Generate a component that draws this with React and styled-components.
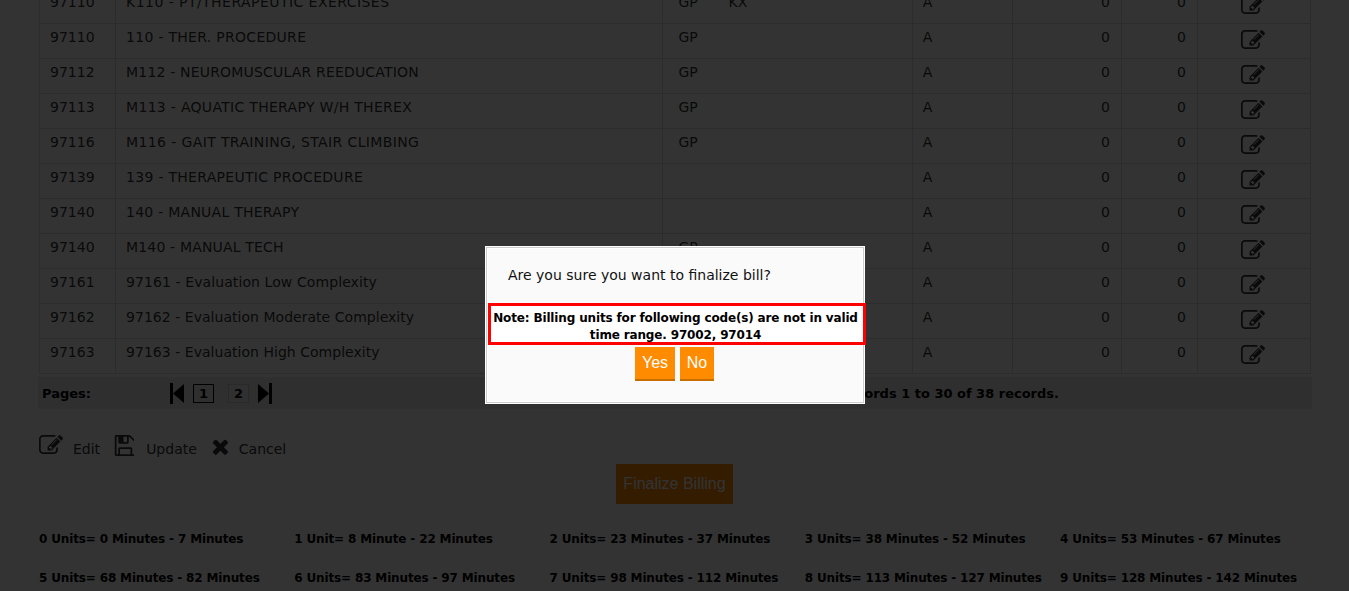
import React from 'react';
import styled, { createGlobalStyle } from 'styled-components';

const GlobalStyle = createGlobalStyle`
  html, body {
    margin: 0;
    padding: 0;
    height: 100%;
    overflow: hidden;
    background: #fff;
  }
  #root {
    height: 100%;
  }
`;

const Page = styled.div`
  height: 591px;
  overflow: hidden;
  position: relative;
  background: #fff;
  color: #333;
  font-family: "DejaVu Sans", Verdana, sans-serif;
  font-size: 14px;
`;

const Content = styled.div`
  margin-top: -12px;
  padding: 0 38px 0 39px;
`;

const Table = styled.table`
  width: 100%;
  table-layout: fixed;
  border-collapse: collapse;
  border-left: 1px solid #ccc;
  border-right: 1px solid #ccc;
`;

const Col = styled.col`
  width: ${props => props.$w}px;
`;

const Cell = styled.td`
  height: 35px;
  padding: 0 11px 0 10px;
  border: 1px solid #ddd;
  text-align: ${props => (props.$right ? 'right' : 'left')};
  vertical-align: top;
  line-height: 27px;
  box-sizing: border-box;
`;

const NameCell = styled(Cell)`
  letter-spacing: ${props => props.$track}px;
  white-space: nowrap;
`;

const ModifierCell = styled(Cell)`
  padding-left: 15px;
`;

const IconCell = styled(Cell)`
  text-align: center;
  line-height: 0;
  padding: 6px 2px 0 0;
  color: #333;
`;

const Modifier = styled.span`
  display: inline-block;
  width: 50px;
`;

const Pager = styled.div`
  display: flex;
  align-items: center;
  height: 32px;
  margin-top: 3px;
  margin-right: -1px;
  margin-left: -1px;
  background: #e8e8e8;
  font-weight: bold;
  font-size: 13px;
`;

const PagerLabel = styled.span`
  width: 132px;
  padding-left: 4px;
  box-sizing: border-box;
  color: #000;
`;

const PageNav = styled.div`
  display: flex;
  align-items: center;
  gap: 9px;
`;

const PageNum = styled.span`
  width: 21px;
  height: 19px;
  line-height: 17px;
  text-align: center;
  box-sizing: border-box;
  border: 1px solid ${props => (props.$active ? '#000' : '#ccc')};
  background: ${props => (props.$active ? 'transparent' : '#eee')};
  margin-left: ${props => (props.$gap ? '5px' : '0')};
  color: #000;
`;

const PagerInfo = styled.span`
  margin-left: auto;
  margin-right: 253px;
  color: #000;
`;

const Actions = styled.div`
  display: flex;
  align-items: flex-start;
  gap: 13px;
  margin-top: 26px;
  height: 29px;
`;

const Action = styled.span`
  display: flex;
  align-items: flex-start;
  gap: ${props => props.$gap}px;
  color: #333;
`;

const ActionText = styled.span`
  line-height: 18px;
  margin-top: 5px;
`;

const CancelMark = styled.span`
  display: flex;
  margin-top: 3px;
`;

const FinalizeRow = styled.div`
  display: flex;
  justify-content: center;
  padding-right: 1px;
`;

const Finalize = styled.button`
  width: 117px;
  height: 40px;
  padding: 0;
  border: none;
  background: #ff8c00;
  color: #fff;
  font-family: "Liberation Sans", Arial, sans-serif;
  font-size: 16px;
`;

const UnitGrid = styled.div`
  display: grid;
  grid-template-columns: repeat(5, 255.25px);
  row-gap: 24px;
  margin-top: 28px;
`;

const Unit = styled.div`
  font-weight: bold;
  font-size: 12px;
  letter-spacing: -0.15px;
  line-height: 15px;
  white-space: nowrap;
  color: #000;
`;

const Overlay = styled.div`
  position: absolute;
  inset: 0;
  background: rgba(0, 0, 0, 0.8);
`;

const Modal = styled.div`
  position: absolute;
  left: 485px;
  top: 246px;
  width: 380px;
  height: 158px;
  box-sizing: border-box;
  border: 1px solid #fff;
  background: #fafafa;
  box-shadow: inset 0 0 0 1px #ccc, inset 0 0 0 2px #fff;
  color: #000;
`;

const Question = styled.p`
  margin: 0;
  padding: 19px 0 0 22px;
  font-size: 14px;
  line-height: 18px;
  color: #111;
`;

const Note = styled.div`
  margin: 19px -2px 0 2px;
  height: 42px;
  box-sizing: border-box;
  border: 3px solid #f00;
  background: #fff;
  padding: 4px 3px 0 0;
  font-size: 12px;
  letter-spacing: -0.15px;
  font-weight: bold;
  line-height: 17px;
  text-align: center;
`;

const ButtonRow = styled.div`
  display: flex;
  justify-content: center;
  gap: 5px;
  margin-top: 2px;
  margin-left: -1px;
`;

const DialogButton = styled.button`
  width: ${props => props.$w}px;
  height: 34px;
  padding: 0;
  border: none;
  border-bottom: 2px solid #c86e00;
  background: #ff8c00;
  color: #fff;
  font-family: "Liberation Sans", Arial, sans-serif;
  font-size: 16px;
`;

const rows = [
  ['97110', 'K110 - PT/THERAPEUTIC EXERCISES', 0.45, 'GP', 'KX'],
  ['97110', '110 - THER. PROCEDURE', 0.29, 'GP'],
  ['97112', 'M112 - NEUROMUSCULAR REEDUCATION', 0.18, 'GP'],
  ['97113', 'M113 - AQUATIC THERAPY W/H THEREX', 0.3, 'GP'],
  ['97116', 'M116 - GAIT TRAINING, STAIR CLIMBING', 0.38, 'GP'],
  ['97139', '139 - THERAPEUTIC PROCEDURE', 0.29],
  ['97140', '140 - MANUAL THERAPY', 0.25],
  ['97140', 'M140 - MANUAL TECH', 0.16, 'GP'],
  ['97161', '97161 - Evaluation Low Complexity', 0.09, 'GP'],
  ['97162', '97162 - Evaluation Moderate Complexity', 0.03, 'GP'],
  ['97163', '97163 - Evaluation High Complexity', 0.03, 'GP'],
];

const units = [
  '0 Units= 0 Minutes - 7 Minutes',
  '1 Unit= 8 Minute - 22 Minutes',
  '2 Units= 23 Minutes - 37 Minutes',
  '3 Units= 38 Minutes - 52 Minutes',
  '4 Units= 53 Minutes - 67 Minutes',
  '5 Units= 68 Minutes - 82 Minutes',
  '6 Units= 83 Minutes - 97 Minutes',
  '7 Units= 98 Minutes - 112 Minutes',
  '8 Units= 113 Minutes - 127 Minutes',
  '9 Units= 128 Minutes - 142 Minutes',
];

const EditIcon = () => (
  <svg width="24" height="19" viewBox="0 128 1792 1408" fill="currentColor">
    <path d="M888 1184l116-116-152-152-116 116v56h96v96h56zm440-720q-16-16-33 1l-350 350q-17 17-1 33t33-1l350-350q17-17 1-33zm80 594v190q0 119-84.5 203.5t-203.5 84.5h-832q-119 0-203.5-84.5t-84.5-203.5v-832q0-119 84.5-203.5t203.5-84.5h832q63 0 117 25 15 7 18 23 3 17-9 29l-49 49q-14 14-32 8-23-6-45-6h-832q-66 0-113 47t-47 113v832q0 66 47 113t113 47h832q66 0 113-47t47-113v-126q0-13 9-22l64-64q15-15 35-7t20 29zm-96-738l288 288-672 672h-288v-288zm444 132l-92 92-288-288 92-92q28-28 68-28t68 28l152 152q28 28 28 68t-28 68z" />
  </svg>
);

const SaveIcon = () => (
  <svg width="21" height="21" viewBox="0 128 1536 1536" fill="currentColor">
    <path d="M512 1536h768v-384h-768v384zm896 0h128v-896q0-14-10-38.5t-20-34.5l-281-281q-10-10-34-20t-39-10v416q0 40-28 68t-68 28h-576q-40 0-68-28t-28-68v-416h-128v1280h128v-416q0-40 28-68t68-28h832q40 0 68 28t28 68v416zm-384-928v-320q0-13-9.5-22.5t-22.5-9.5h-192q-13 0-22.5 9.5t-9.5 22.5v320q0 13 9.5 22.5t22.5 9.5h192q13 0 22.5-9.5t9.5-22.5zm640 32v928q0 40-28 68t-68 28h-1344q-40 0-68-28t-28-68v-1344q0-40 28-68t68-28h928q40 0 88 20t76 48l280 280q28 28 48 76t20 88z" />
  </svg>
);

const CancelIcon = () => (
  <svg width="18" height="17" viewBox="82 240 1408 1316" fill="currentColor">
    <path d="M1490 1322q0 40-28 68l-136 136q-28 28-68 28t-68-28l-294-294-294 294q-28 28-68 28t-68-28l-136-136q-28-28-28-68t28-68l294-294-294-294q-28-28-28-68t28-68l136-136q28-28 68-28t68 28l294 294 294-294q28-28 68-28t68 28l136 136q28 28 28 68t-28 68l-294 294 294 294q28 28 28 68z" />
  </svg>
);

const SkipIcon = ({ flip }) => (
  <svg width="14" height="21" viewBox="0 0 14 21">
    <g transform={flip ? 'translate(14 0) scale(-1 1)' : undefined}>
      <rect x="0" y="0" width="3" height="21" fill="#000" />
      <polygon points="14,1 3,10.5 14,20" fill="#000" />
    </g>
  </svg>
);

export default function App() {
  return (
    <Page>
      <GlobalStyle />
      <Content>
        <Table>
          <colgroup>
            <Col $w={76} />
            <Col $w={547} />
            <Col $w={249} />
            <Col $w={100} />
            <Col $w={109} />
            <Col $w={76} />
            <Col $w={113} />
          </colgroup>
          <tbody>
            {rows.map(([code, name, track, mod, mod2], i) => (
              <tr key={i}>
                <Cell>{code}</Cell>
                <NameCell $track={track}>{name}</NameCell>
                <ModifierCell>
                  {mod && <Modifier>{mod}</Modifier>}
                  {mod2}
                </ModifierCell>
                <Cell>A</Cell>
                <Cell $right>0</Cell>
                <Cell $right>0</Cell>
                <IconCell><EditIcon /></IconCell>
              </tr>
            ))}
          </tbody>
        </Table>
        <Pager>
          <PagerLabel>Pages:</PagerLabel>
          <PageNav>
            <SkipIcon />
            <PageNum $active>1</PageNum>
            <PageNum $gap>2</PageNum>
            <SkipIcon flip />
          </PageNav>
          <PagerInfo>Showing records 1 to 30 of 38 records.</PagerInfo>
        </Pager>
        <Actions>
          <Action $gap={10}><EditIcon /><ActionText>Edit</ActionText></Action>
          <Action $gap={12}><SaveIcon /><ActionText>Update</ActionText></Action>
          <Action $gap={11}><CancelMark><CancelIcon /></CancelMark><ActionText>Cancel</ActionText></Action>
        </Actions>
        <FinalizeRow>
          <Finalize>Finalize Billing</Finalize>
        </FinalizeRow>
        <UnitGrid>
          {units.map(u => <Unit key={u}>{u}</Unit>)}
        </UnitGrid>
      </Content>
      <Overlay />
      <Modal>
        <Question>Are you sure you want to finalize bill?</Question>
        <Note>Note: Billing units for following code(s) are not in valid time range. 97002, 97014</Note>
        <ButtonRow>
          <DialogButton $w={40}>Yes</DialogButton>
          <DialogButton $w={34}>No</DialogButton>
        </ButtonRow>
      </Modal>
    </Page>
  );
}
